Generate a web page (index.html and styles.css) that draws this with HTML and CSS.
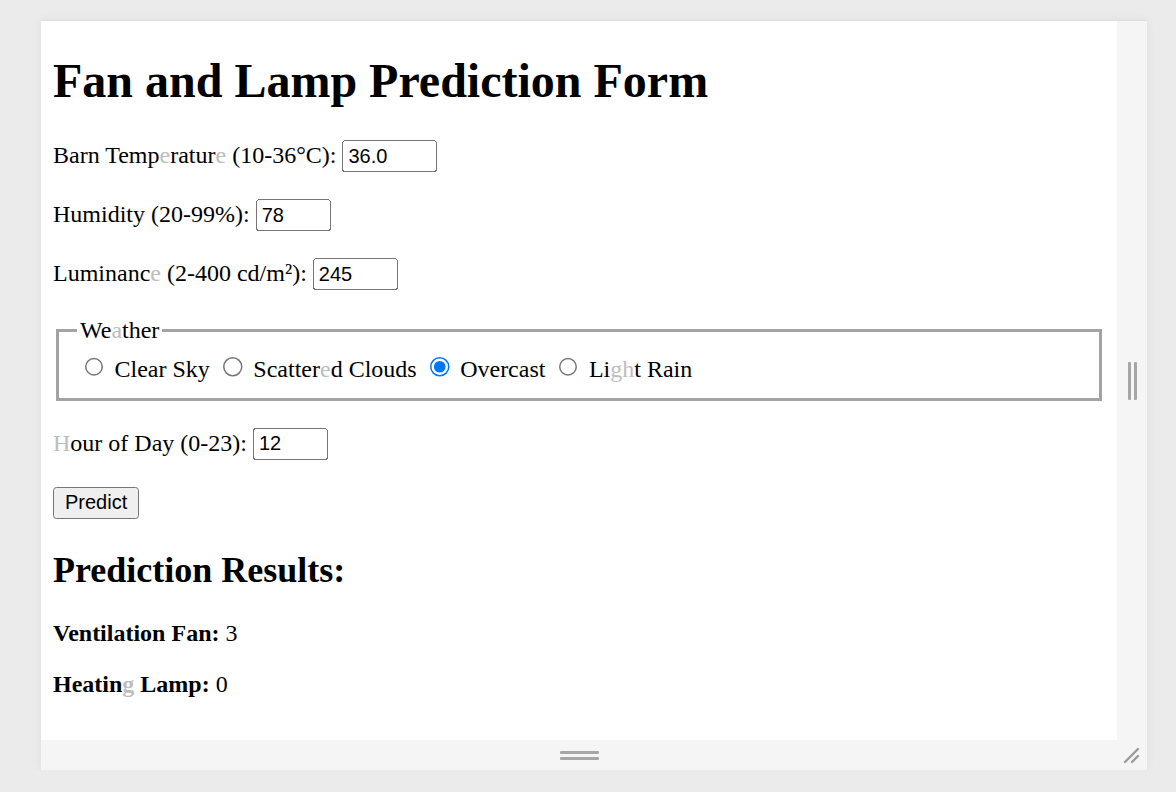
FILE: index.html
```html
<!DOCTYPE html>
<html>
<head>
<meta charset="utf-8">
<title>Fan and Lamp Prediction Form</title>
<link rel="stylesheet" href="styles.css">
</head>
<body>
<div class="frame">
  <div class="viewport">
    <div class="content">
      <h1>Fan and Lamp Prediction Form</h1>
      <form class="form">
        <p class="row"><label>Barn Temp<span class="dim">e</span>ratur<span class="dim">e</span> (10-36°C): </label><input class="field w-temp" type="text" value="36.0"></p>
        <p class="row"><label>Humidity (20-99%): </label><input class="field w-hum" type="text" value="78"></p>
        <p class="row"><label>Luminanc<span class="dim">e</span> (2-400 cd/m²): </label><input class="field w-lum" type="text" value="245"></p>
        <fieldset class="weather">
          <legend>We<span class="dim">a</span>ther</legend>
          <input class="radio" type="radio" name="w" id="w1"> <label for="w1">Clear Sky</label>
          <input class="radio" type="radio" name="w" id="w2"> <label for="w2">Scatter<span class="dim">e</span>d Clouds</label>
          <input class="radio" type="radio" name="w" id="w3" checked> <label for="w3">Overcast</label>
          <input class="radio" type="radio" name="w" id="w4"> <label for="w4">Li<span class="dim">gh</span>t Rain</label>
        </fieldset>
        <p class="row"><label><span class="dim">H</span>our of Day (0-23): </label><input class="field w-hour" type="text" value="12"></p>
        <p class="row"><button class="btn" type="button">Predict</button></p>
      </form>
      <h2>Prediction Results:</h2>
      <p><strong>Ventilation Fan:</strong> 3</p>
      <p><strong>Heatin<span class="dim">g</span> Lamp:</strong> 0</p>
    </div>
  </div>
  <div class="vbar"><span class="grip-v"></span><span class="grip-v"></span></div>
  <div class="hbar"><span class="grip-h"></span><span class="grip-h"></span></div>
  <div class="corner">
    <svg width="20" height="20" viewBox="0 0 20 20"><path d="M3 17 L16 4 M10 17 L16 11" stroke="#9a9a9a" stroke-width="2.4" stroke-linecap="round" fill="none"/></svg>
  </div>
</div>
</body>
</html>
```
FILE: styles.css
```css
html, body {
  margin: 0;
  background: #ebebeb;
}
body {
  padding: 21px 0 0 41px;
}
.frame {
  display: grid;
  grid-template-columns: 1076px 30px;
  grid-template-rows: 719px 30px;
  width: 1106px;
  box-shadow: 0 0 10px rgba(0,0,0,0.06);
  border-top: 1px solid #dedede;
  margin-top: -1px;
}
.viewport {
  background: #fff;
  overflow: hidden;
}
.content {
  zoom: 1.5;
  padding: 0 8px;
  font-family: "Liberation Serif", "Times New Roman", serif;
  font-size: 16px;
  color: #000;
}
.content h1 {
  font-size: 32px;
  margin: 21.44px 0;
}
.content h2 {
  font-size: 24px;
  margin: 19.92px 0;
}
.content p {
  margin: 16px 0;
}
.form {
  margin: 0;
}
.dim {
  color: #bdbdbd;
}
.field {
  font-family: "Liberation Sans", Arial, sans-serif;
  font-size: 13.333px;
  box-sizing: border-box;
  padding: 1px 2px;
  margin: 0 0 2px;
}
.w-temp { width: 63.3px; }
.w-hum { width: 50px; }
.w-lum { width: 56.7px; }
.w-hour { width: 50px; }
.weather {
  margin: 0 2px 18px;
  padding: 0.35em 0.75em 0.625em;
  border: 2px solid #a3a3a3;
}
.weather legend {
  padding: 0 2px;
}
.radio {
  margin: 3px 3px 0 5px;
}
.btn {
  font-family: "Liberation Sans", Arial, sans-serif;
  font-size: 13.333px;
}
.vbar, .hbar, .corner {
  background: #f5f5f5;
}
.vbar {
  display: flex;
  justify-content: center;
  align-items: center;
  gap: 3px;
}
.grip-v {
  width: 3px;
  height: 38px;
  background: #a6a6a6;
  border-radius: 1px;
}
.hbar {
  display: flex;
  flex-direction: column;
  justify-content: center;
  align-items: center;
  gap: 3px;
}
.grip-h {
  width: 39px;
  height: 3px;
  background: #a6a6a6;
  border-radius: 1px;
}
.corner {
  display: flex;
  align-items: center;
  justify-content: center;
}
```
